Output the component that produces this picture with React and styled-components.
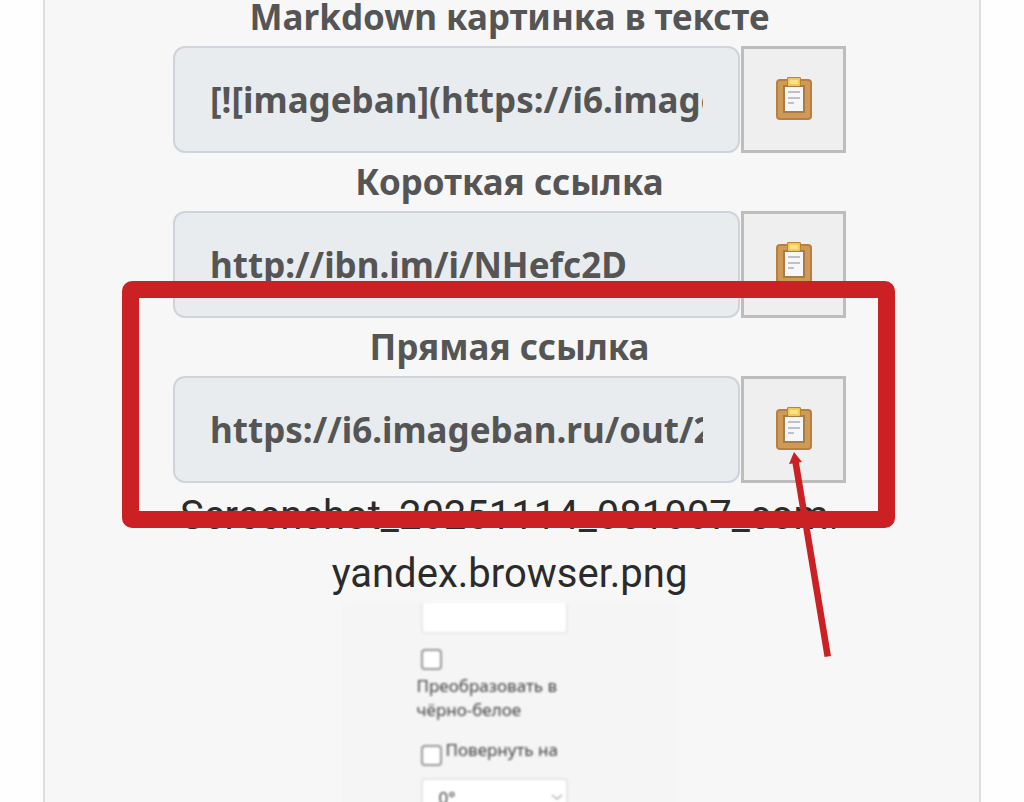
import styled, { createGlobalStyle } from "styled-components"

const links = [
    { id: "markdown", title: "Markdown картинка в тексте", value: "[![imageban](https://i6.imageban.ru/out/2025/11/14/)" },
    { id: "short", title: "Короткая ссылка", value: "http://ibn.im/i/NHefc2D" },
    { id: "direct", title: "Прямая ссылка", value: "https://i6.imageban.ru/out/2025/11/14/", marked: true },
]

export default function App(){
    return(<>
      <GlobalStyle/>
      <Panel>
        <Links>
            {links.map((link) => <LinkField key={link.id} {...link}/>)}
        </Links>
        <FileName>Screenshot_20251114_081007_com.<wbr/>yandex.browser.png</FileName>
        <Preview/>
      </Panel>
    </>)
}

function LinkField({ id, title, value, marked }){
    return(
      <Field>
        <Label htmlFor={id}>{title}</Label>
        <Group>
            <LinkInput id={id} defaultValue={value} readOnly/>
            <CopyButton type="button" aria-label="Копировать"><Clipboard/></CopyButton>
        </Group>
        {marked && <>
            <Frame/>
            <Arrow viewBox="0 0 50 206" aria-hidden="true">
                <path d="M7 0 L15 10 L12 10.500 L44 204 L37.500 205 L5.500 11.500 L2 12 Z" fill="#cc2124"/>
            </Arrow>
        </>}
      </Field>
    )
}

function Clipboard(){
    return(
      <ClipboardIcon viewBox="0 0 36 44" aria-hidden="true">
        <rect x="0" y="3" width="36" height="41" rx="4" fill="#b88040"/>
        <rect x="2" y="5" width="32" height="37" rx="2" fill="#cf9a55"/>
        <rect x="7" y="9" width="22" height="28" fill="#a97b46"/>
        <path d="M11 2 Q11 1 13 1 H23 Q25 1 25 2 V10 H11 Z" fill="#b9852f"/>
        <rect x="9" y="11" width="18" height="24" fill="#f7f7f7"/>
        <rect x="12" y="2" width="12" height="8" rx="1" fill="#f3c95c"/>
        <rect x="14" y="4" width="8" height="4" fill="#fbe289"/>
        <path d="M12 16 H24 M12 22 H24 M12 27 H18" stroke="#bfc1c6" strokeWidth="2"/>
      </ClipboardIcon>
    )
}

function Preview(){
    return(
      <Thumb>
        <TextBox aria-label="Размер"/>
        <StackedCheck>
            <Check type="checkbox"/>
            <span>Преобразовать в чёрно-белое</span>
        </StackedCheck>
        <InlineCheck>
            <Check type="checkbox"/>
            <span>Повернуть на</span>
        </InlineCheck>
        <SelectWrap>
            <Angle aria-label="Угол">
                <option>0°</option>
                <option>90°</option>
            </Angle>
            <Chevron viewBox="0 0 12 8" aria-hidden="true">
                <path d="M1 2 L6 6 L11 2" fill="none" stroke="#777777" strokeWidth="1"/>
            </Chevron>
        </SelectWrap>
      </Thumb>
    )
}

const GlobalStyle = createGlobalStyle`
*{
box-sizing: border-box;
}
body{
margin: 0;
background-color: #fefefe;
overflow: hidden;
}
`
const Panel=styled.main`
margin: 0 43px;
padding: 0 133px 0 128px;
border: solid #dddfe1;
border-width: 0 2px;
background-color: #f7f7f7;
`
const Links=styled.div`
display: flex;
flex-direction: column;
gap: 12px;
`
const Field=styled.div`
position: relative;
display: flex;
flex-direction: column;
`
const Label=styled.label`
padding-bottom: 12px;
color: #555555;
font-family: "Noto Sans", sans-serif;
font-size: 35px;
font-weight: 700;
line-height: 34px;
text-align: center;
white-space: nowrap;
`
const Group=styled.div`
display: flex;
gap: 1px;
`
const LinkInput=styled.input`
flex: 1;
min-width: 0;
height: 107px;
padding: 0 35px;
border: 2px solid #ced4da;
border-radius: 12px;
outline: none;
background-color: #e8ecef;
color: #555555;
font-family: "Noto Sans", sans-serif;
font-size: 35px;
font-weight: 700;
`
const CopyButton=styled.button`
display: flex;
justify-content: center;
align-items: center;
width: 105px;
height: 107px;
padding: 0 0 4px;
border: 3px solid #bdbdbd;
background-color: #efefef;
`
const ClipboardIcon=styled.svg`
width: 36px;
height: 44px;
`
const Frame=styled.div`
position: absolute;
top: -49px;
right: -49px;
bottom: -45px;
left: -51px;
border: 17px solid #cc2124;
border-radius: 10px;
pointer-events: none;
`
const Arrow=styled.svg`
position: absolute;
top: 122px;
right: 9px;
width: 50px;
height: 206px;
pointer-events: none;
`
const FileName=styled.div`
padding-top: 4px;
color: #2b2b2b;
font-family: Roboto, sans-serif;
font-size: 40px;
line-height: 58px;
text-align: center;
`
const Thumb=styled.div`
display: flex;
flex-direction: column;
width: 334px;
margin: 0 auto;
padding: 0 109px 0 78px;
background-color: #f5f5f5;
color: #444444;
font-family: "Noto Sans", sans-serif;
font-size: 17px;
line-height: 24px;
filter: blur(1px);
`
const TextBox=styled.input`
width: 100%;
height: 31px;
border: 2px solid #e6eaed;
border-top: 0;
border-radius: 0 0 4px 4px;
background-color: #ffffff;
`
const StackedCheck=styled.label`
display: flex;
flex-direction: column;
gap: 4px;
margin: 15px -8px 0 -4px;
input{
margin-left: 4px;
}
`
const InlineCheck=styled.label`
display: flex;
align-items: flex-end;
gap: 4px;
margin: 16px -8px 12px 0;
white-space: nowrap;
span{
padding-bottom: 4px;
}
`
const Check=styled.input`
appearance: none;
flex: none;
width: 21px;
height: 21px;
margin: 0;
border: 2px solid #999999;
border-radius: 4px;
background-color: #ffffff;
`
const SelectWrap=styled.div`
position: relative;
`
const Angle=styled.select`
appearance: none;
width: 100%;
height: 38px;
padding: 0 16px;
border: 2px solid #e2e6ea;
border-radius: 4px;
background-color: #ffffff;
color: #444444;
font-family: "Noto Sans", sans-serif;
font-size: 17px;
`
const Chevron=styled.svg`
position: absolute;
top: 15px;
right: 5px;
width: 12px;
height: 8px;
`
